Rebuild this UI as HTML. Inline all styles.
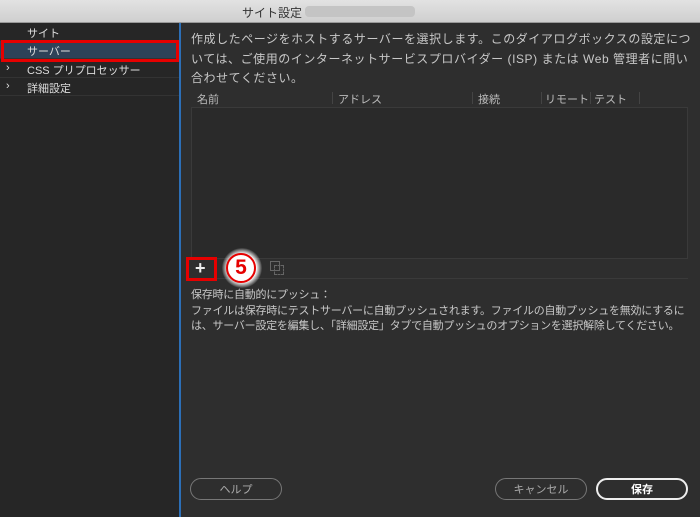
<!DOCTYPE html>
<html><head><meta charset="utf-8"><style>
*{margin:0;padding:0;box-sizing:border-box}
body{width:700px;height:517px;background:#2e2e2e;font-family:"Liberation Sans","Noto Sans CJK JP",sans-serif;color:#c8c8c8;position:relative;overflow:hidden;font-size:11px}
.t{position:absolute;white-space:nowrap}
#title{position:absolute;left:0;top:0;width:700px;height:23px;background:linear-gradient(#e2e2e2,#cfcfcf);border-bottom:1px solid #999;color:#333;font-size:12px}
#side{position:absolute;left:0;top:23px;width:179px;height:494px;background:#262626}
#bl{position:absolute;left:179px;top:23px;width:2px;height:494px;background:#2c6fb7}
.row{position:absolute;left:0;width:179px;height:18px;border-bottom:1px solid #333;font-size:11px;color:#ddd}
.btn{position:absolute;height:22px;border:1.5px solid #777;border-radius:11px;display:flex;align-items:center;justify-content:center;font-size:11px;color:#aaa}
</style></head><body>
<div id="title"><span class="t" style="left:242px;top:4px">サイト設定</span><span style="position:absolute;left:305px;top:6px;width:110px;height:11px;background:#c4c4c4;border-radius:4px"></span></div>
<div id="side">
<div class="row" style="top:0"><span class="t" style="left:27px;top:2px">サイト</span></div>
<div class="row" style="top:18px;background:#2e4258"><span class="t" style="left:27px;top:2px">サーバー</span></div>
<div class="row" style="top:37px"><span class="t" style="left:6px;top:2px">›</span><span class="t" style="left:27px;top:2px">CSS プリプロセッサー</span></div>
<div class="row" style="top:55px"><span class="t" style="left:6px;top:2px">›</span><span class="t" style="left:27px;top:2px">詳細設定</span></div>
</div>
<div style="position:absolute;left:1px;top:40px;width:178px;height:22px;border:3px solid #e60000"></div>
<div id="bl"></div>
<div class="t" style="left:191px;top:30px;font-size:12px;line-height:19.5px;color:#c8c8c8;letter-spacing:0.55px">作成したページをホストするサーバーを選択します。このダイアログボックスの設定につ<br>いては、ご使用のインターネットサービスプロバイダー (ISP) または Web 管理者に問い<br>合わせてください。</div>
<div style="position:absolute;left:191px;top:90px;width:497px;height:15px;font-size:11px;color:#bbb">
<span class="t" style="left:6px;top:1px">名前</span><span style="position:absolute;left:141px;top:2px;width:1px;height:12px;background:#444"></span>
<span class="t" style="left:147px;top:1px">アドレス</span><span style="position:absolute;left:281px;top:2px;width:1px;height:12px;background:#444"></span>
<span class="t" style="left:287px;top:1px">接続</span><span style="position:absolute;left:350px;top:2px;width:1px;height:12px;background:#444"></span>
<span class="t" style="left:354px;top:1px">リモート</span><span style="position:absolute;left:399px;top:2px;width:1px;height:12px;background:#444"></span>
<span class="t" style="left:403px;top:1px">テスト</span><span style="position:absolute;left:448px;top:2px;width:1px;height:12px;background:#444"></span>
</div>
<div style="position:absolute;left:191px;top:107px;width:497px;height:152px;border:1px solid #3a3a3a;background:#2a2a2a"></div>
<div style="position:absolute;left:191px;top:259px;width:497px;height:20px;border-bottom:1px solid #3a3a3a"></div>
<div style="position:absolute;left:186px;top:257px;width:31px;height:24px;border:3px solid #e60000"></div>
<div class="t" style="left:195px;top:258px;font-size:18px;color:#eee;font-weight:bold">+</div>
<div style="position:absolute;left:222px;top:248px;width:40px;height:40px;border-radius:50%;background:radial-gradient(#fff 50%,rgba(255,255,255,0) 72%)"></div>
<div style="position:absolute;left:226px;top:253px;width:30px;height:30px;border-radius:50%;border:2.5px solid #e60000;color:#e60000;font-size:21px;font-weight:bold;text-align:center;line-height:25px">5</div>
<div style="position:absolute;left:270px;top:261px;width:10px;height:10px;border:1px solid #666"></div>
<div style="position:absolute;left:274px;top:265px;width:10px;height:10px;border:1px dashed #666"></div>
<div class="t" style="left:191px;top:288px;font-size:11px;line-height:15.5px;color:#c8c8c8;letter-spacing:-0.25px">保存時に自動的にプッシュ：<br>ファイルは保存時にテストサーバーに自動プッシュされます。ファイルの自動プッシュを無効にするに<br>は、サーバー設定を編集し、「詳細設定」タブで自動プッシュのオプションを選択解除してください。</div>
<div class="btn" style="left:190px;top:478px;width:92px">ヘルプ</div>
<div class="btn" style="left:495px;top:478px;width:92px">キャンセル</div>
<div class="btn" style="left:596px;top:478px;width:92px;border:2px solid #eee;color:#fff;font-weight:bold">保存</div>
</body></html>
